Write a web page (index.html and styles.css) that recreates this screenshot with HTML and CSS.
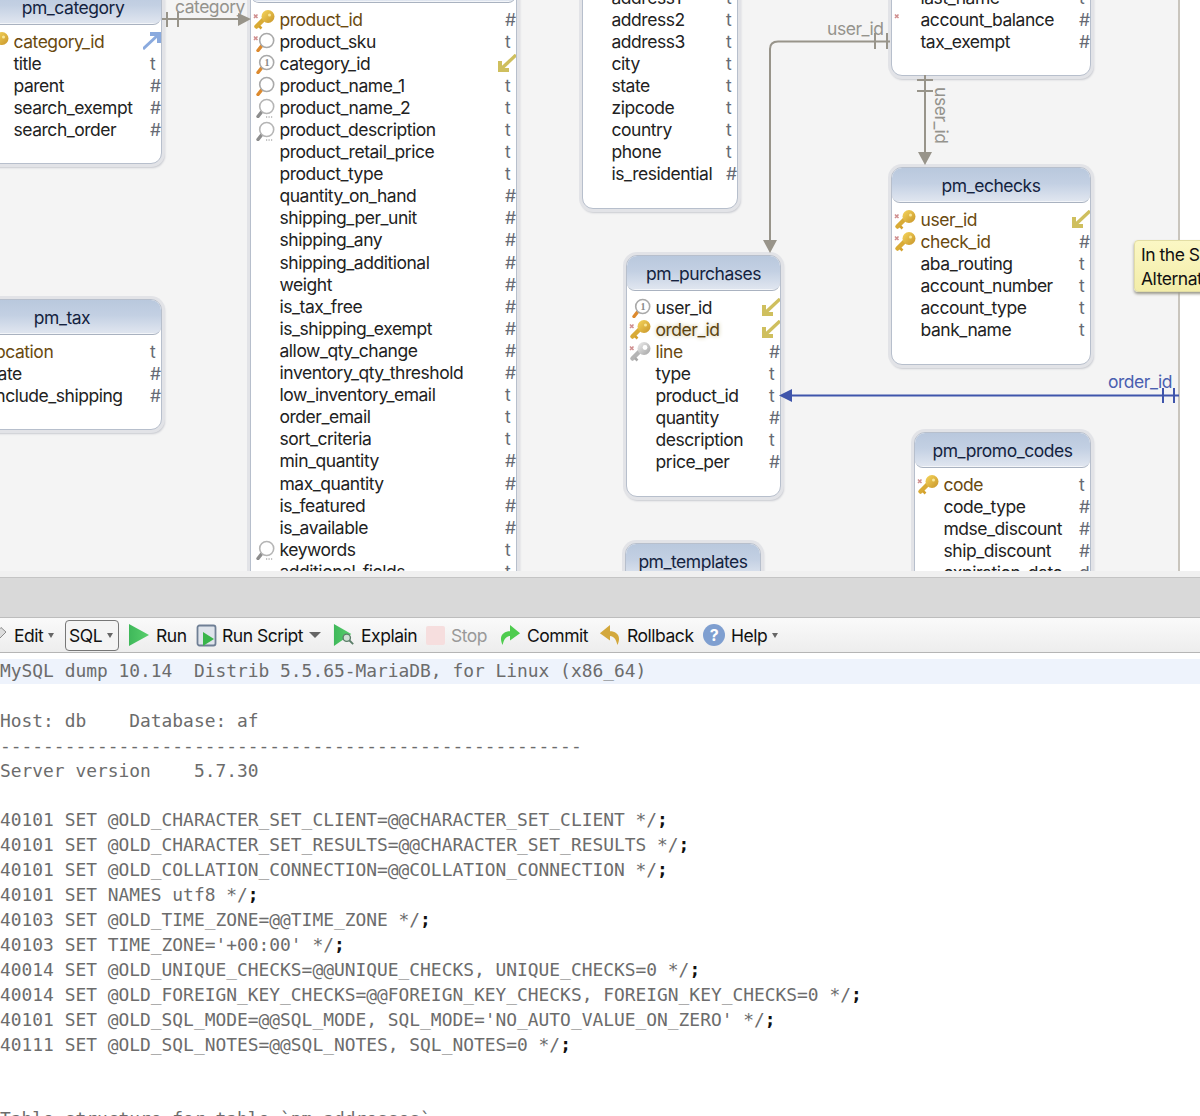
FILE: index.html
```html
<!DOCTYPE html>
<html lang="en">
<head>
  <meta charset="UTF-8">
  <title>Schema designer</title>
  <link rel="stylesheet" href="styles.css">
</head>
<body>
  <svg class="defs" aria-hidden="true">
    <defs>
      <linearGradient id="gold" x1="0" y1="0" x2="1" y2="1">
        <stop offset="0" stop-color="#f6d65c"/>
        <stop offset="1" stop-color="#c8952a"/>
      </linearGradient>
      <linearGradient id="silver" x1="0" y1="0" x2="1" y2="1">
        <stop offset="0" stop-color="#eeeeee"/>
        <stop offset="1" stop-color="#a4a4a4"/>
      </linearGradient>
      <linearGradient id="green" x1="0" y1="0" x2="1" y2="0">
        <stop offset="0" stop-color="#3fb85a"/>
        <stop offset="1" stop-color="#58cf6c"/>
      </linearGradient>
      <symbol id="cross" viewBox="0 0 26 22">
        <path d="M2 6.500 5.500 10M5.500 6.500 2 10" stroke="#d08f8f" stroke-width="1.600" fill="none"/>
      </symbol>
      <symbol id="key" viewBox="0 0 26 22">
        <path d="M11 12 4.500 18.500" stroke="#d9ab36" stroke-width="4.500" stroke-linecap="round"/>
        <path d="M7 18l2.500 2.500" stroke="#d4a22f" stroke-width="2.500"/>
        <circle cx="16" cy="8.500" r="6.500" fill="url(#gold)"/>
        <circle cx="17.500" cy="7" r="1.500" fill="#f9e89a"/>
      </symbol>
      <symbol id="key-grey" viewBox="0 0 26 22">
        <path d="M11 12 4.500 18.500" stroke="#b5b5b5" stroke-width="4.500" stroke-linecap="round"/>
        <path d="M7 18l2.500 2.500" stroke="#aaa" stroke-width="2.500"/>
        <circle cx="16" cy="8.500" r="6.500" fill="url(#silver)"/>
        <circle cx="17" cy="7.500" r="2.400" fill="#fff"/>
      </symbol>
      <symbol id="lens-orange" viewBox="0 0 26 22">
        <path d="M9.500 16 6 20.500" stroke="#dd8a2e" stroke-width="3.400" stroke-linecap="round"/>
        <circle cx="14.700" cy="10.500" r="7" fill="#fff" stroke="#a9a9a9" stroke-width="1.600"/>
      </symbol>
      <symbol id="lens-grey" viewBox="0 0 26 22">
        <path d="M9.500 16 6 20.500" stroke="#8d8d8d" stroke-width="3.400" stroke-linecap="round"/>
        <circle cx="14.700" cy="10.500" r="7" fill="#fff" stroke="#b5b5b5" stroke-width="1.600"/>
        <path d="M14 21h1.200M16.500 21h1.200M19 21h1.200" stroke="#888"/>
      </symbol>
      <symbol id="lens-one" viewBox="0 0 26 22">
        <path d="M9.500 16 6 20.500" stroke="#dd8a2e" stroke-width="3.400" stroke-linecap="round"/>
        <circle cx="14.700" cy="10.500" r="7" fill="#fff" stroke="#a9a9a9" stroke-width="1.600"/>
        <text x="14.700" y="14" class="lens-digit">1</text>
      </symbol>
      <symbol id="fk-in" viewBox="0 0 18 18">
        <path d="M3 15 18 1" stroke="#cfbf5e" stroke-width="3.400"/>
        <polygon points="0,7 4,7 4,14 11,14 11,18 0,18" fill="#cfbf5e"/>
      </symbol>
      <symbol id="fk-out" viewBox="0 0 18 18">
        <path d="M0 17 15 3" stroke="#8aaade" stroke-width="3"/>
        <polygon points="7,0 18,0 18,11 14,11 14,4 7,4" fill="#8aaade"/>
      </symbol>
    </defs>
  </svg>

  <div class="canvas">
    <!-- pm_category -->
    <div class="table tbl-category">
      <div class="table-head">pm_category</div>
      <div class="row pk"><svg class="ico"><use href="#key"/></svg><span class="name">category_id</span><svg class="fk"><use href="#fk-out"/></svg></div>
      <div class="row"><span class="ico"></span><span class="name">title</span><span class="type">t</span></div>
      <div class="row"><span class="ico"></span><span class="name">parent</span><span class="type">#</span></div>
      <div class="row"><span class="ico"></span><span class="name">search_exempt</span><span class="type">#</span></div>
      <div class="row"><span class="ico"></span><span class="name">search_order</span><span class="type">#</span></div>
    </div>

    <!-- pm_tax -->
    <div class="table tbl-tax">
      <div class="table-head">pm_tax</div>
      <div class="row pk"><span class="ico"></span><span class="name">location</span><span class="type">t</span></div>
      <div class="row"><span class="ico"></span><span class="name">rate</span><span class="type">#</span></div>
      <div class="row"><span class="ico"></span><span class="name">include_shipping</span><span class="type">#</span></div>
    </div>

    <!-- pm_products -->
    <div class="table tbl-products">
      <div class="table-head">pm_products</div>
      <div class="row pk"><svg class="ico"><use href="#key"/><use href="#cross"/></svg><span class="name">product_id</span><span class="type">#</span></div>
      <div class="row"><svg class="ico"><use href="#lens-orange"/><use href="#cross"/></svg><span class="name">product_sku</span><span class="type">t</span></div>
      <div class="row"><svg class="ico"><use href="#lens-one"/></svg><span class="name">category_id</span><svg class="fk"><use href="#fk-in"/></svg></div>
      <div class="row"><svg class="ico"><use href="#lens-orange"/></svg><span class="name">product_name_1</span><span class="type">t</span></div>
      <div class="row"><svg class="ico"><use href="#lens-grey"/></svg><span class="name">product_name_2</span><span class="type">t</span></div>
      <div class="row"><svg class="ico"><use href="#lens-grey"/></svg><span class="name">product_description</span><span class="type">t</span></div>
      <div class="row"><span class="ico"></span><span class="name">product_retail_price</span><span class="type">t</span></div>
      <div class="row"><span class="ico"></span><span class="name">product_type</span><span class="type">t</span></div>
      <div class="row"><span class="ico"></span><span class="name">quantity_on_hand</span><span class="type">#</span></div>
      <div class="row"><span class="ico"></span><span class="name">shipping_per_unit</span><span class="type">#</span></div>
      <div class="row"><span class="ico"></span><span class="name">shipping_any</span><span class="type">#</span></div>
      <div class="row"><span class="ico"></span><span class="name">shipping_additional</span><span class="type">#</span></div>
      <div class="row"><span class="ico"></span><span class="name">weight</span><span class="type">#</span></div>
      <div class="row"><span class="ico"></span><span class="name">is_tax_free</span><span class="type">#</span></div>
      <div class="row"><span class="ico"></span><span class="name">is_shipping_exempt</span><span class="type">#</span></div>
      <div class="row"><span class="ico"></span><span class="name">allow_qty_change</span><span class="type">#</span></div>
      <div class="row"><span class="ico"></span><span class="name">inventory_qty_threshold</span><span class="type">#</span></div>
      <div class="row"><span class="ico"></span><span class="name">low_inventory_email</span><span class="type">t</span></div>
      <div class="row"><span class="ico"></span><span class="name">order_email</span><span class="type">t</span></div>
      <div class="row"><span class="ico"></span><span class="name">sort_criteria</span><span class="type">t</span></div>
      <div class="row"><span class="ico"></span><span class="name">min_quantity</span><span class="type">#</span></div>
      <div class="row"><span class="ico"></span><span class="name">max_quantity</span><span class="type">#</span></div>
      <div class="row"><span class="ico"></span><span class="name">is_featured</span><span class="type">#</span></div>
      <div class="row"><span class="ico"></span><span class="name">is_available</span><span class="type">#</span></div>
      <div class="row"><svg class="ico"><use href="#lens-grey"/></svg><span class="name">keywords</span><span class="type">t</span></div>
      <div class="row"><span class="ico"></span><span class="name">additional_fields</span><span class="type">t</span></div>
    </div>

    <!-- pm_addresses -->
    <div class="table tbl-addresses">
      <div class="table-head">pm_addresses</div>
      <div class="row"><span class="ico"></span><span class="name">address1</span><span class="type">t</span></div>
      <div class="row"><span class="ico"></span><span class="name">address2</span><span class="type">t</span></div>
      <div class="row"><span class="ico"></span><span class="name">address3</span><span class="type">t</span></div>
      <div class="row"><span class="ico"></span><span class="name">city</span><span class="type">t</span></div>
      <div class="row"><span class="ico"></span><span class="name">state</span><span class="type">t</span></div>
      <div class="row"><span class="ico"></span><span class="name">zipcode</span><span class="type">t</span></div>
      <div class="row"><span class="ico"></span><span class="name">country</span><span class="type">t</span></div>
      <div class="row"><span class="ico"></span><span class="name">phone</span><span class="type">t</span></div>
      <div class="row"><span class="ico"></span><span class="name">is_residential</span><span class="type">#</span></div>
    </div>

    <!-- pm_users -->
    <div class="table tbl-users">
      <div class="table-head">pm_users</div>
      <div class="row"><span class="ico"></span><span class="name">last_name</span><span class="type">t</span></div>
      <div class="row"><svg class="ico"><use href="#cross"/></svg><span class="name">account_balance</span><span class="type">#</span></div>
      <div class="row"><span class="ico"></span><span class="name">tax_exempt</span><span class="type">#</span></div>
    </div>

    <!-- pm_echecks -->
    <div class="table tbl-echecks">
      <div class="table-head">pm_echecks</div>
      <div class="row pk"><svg class="ico"><use href="#key"/><use href="#cross"/></svg><span class="name">user_id</span><svg class="fk"><use href="#fk-in"/></svg></div>
      <div class="row pk"><svg class="ico"><use href="#key"/><use href="#cross"/></svg><span class="name">check_id</span><span class="type">#</span></div>
      <div class="row"><span class="ico"></span><span class="name">aba_routing</span><span class="type">t</span></div>
      <div class="row"><span class="ico"></span><span class="name">account_number</span><span class="type">t</span></div>
      <div class="row"><span class="ico"></span><span class="name">account_type</span><span class="type">t</span></div>
      <div class="row"><span class="ico"></span><span class="name">bank_name</span><span class="type">t</span></div>
    </div>

    <!-- pm_purchases -->
    <div class="table tbl-purchases">
      <div class="table-head">pm_purchases</div>
      <div class="row"><svg class="ico"><use href="#lens-one"/></svg><span class="name">user_id</span><svg class="fk"><use href="#fk-in"/></svg></div>
      <div class="row pk lit"><svg class="ico"><use href="#key"/><use href="#cross"/></svg><span class="name">order_id</span><svg class="fk"><use href="#fk-in"/></svg></div>
      <div class="row pk"><svg class="ico"><use href="#key-grey"/><use href="#cross"/></svg><span class="name">line</span><span class="type">#</span></div>
      <div class="row"><span class="ico"></span><span class="name">type</span><span class="type">t</span></div>
      <div class="row"><span class="ico"></span><span class="name">product_id</span><span class="type">t</span></div>
      <div class="row"><span class="ico"></span><span class="name">quantity</span><span class="type">#</span></div>
      <div class="row"><span class="ico"></span><span class="name">description</span><span class="type">t</span></div>
      <div class="row"><span class="ico"></span><span class="name">price_per</span><span class="type">#</span></div>
    </div>

    <!-- pm_promo_codes -->
    <div class="table tbl-promo">
      <div class="table-head">pm_promo_codes</div>
      <div class="row pk"><svg class="ico"><use href="#key"/><use href="#cross"/></svg><span class="name">code</span><span class="type">t</span></div>
      <div class="row"><span class="ico"></span><span class="name">code_type</span><span class="type">#</span></div>
      <div class="row"><span class="ico"></span><span class="name">mdse_discount</span><span class="type">#</span></div>
      <div class="row"><span class="ico"></span><span class="name">ship_discount</span><span class="type">#</span></div>
      <div class="row"><span class="ico"></span><span class="name">expiration_date</span><span class="type">d</span></div>
    </div>

    <div class="table tbl-templates">
      <div class="table-head">pm_templates</div>
    </div>

    <!-- relation lines sit over the tables -->
    <svg class="relations" viewBox="0 0 1200 572">
      <g class="rel-grey">
        <path d="M162 19H240M167 12V27M178 12V27"/>
        <path d="M770 241V49Q770 41.500 778 41.500H890M875 33V49M887 33V49"/>
        <path d="M925 75V154M917 80H933M917 91H933"/>
        <polygon points="251,19 238,13 238,26"/>
        <polygon points="770,253 763,240 777,240"/>
        <polygon points="925,165 918,152 932,152"/>
      </g>
      <g class="rel-blue">
        <path d="M790 395.500H1179M1163 388V403M1174 388V403"/>
        <polygon points="779,395.500 792,389 792,402"/>
      </g>
      <text x="175" y="13" class="rel-label">category</text>
      <text x="827" y="35" class="rel-label">user_id</text>
      <text transform="translate(935 87) rotate(90)" class="rel-label">user_id</text>
      <text x="1108" y="388" class="rel-label rel-label-blue">order_id</text>
    </svg>

    <div class="tooltip">
      <div>In the S</div>
      <div>Alternat</div>
    </div>
  </div>

  <div class="splitter"></div>

  <div class="toolbar">
    <div class="tool tool-edit">
      <svg class="tool-ico-pencil" viewBox="0 0 20 18"><path d="M2 17l1.500-5.500L13 1.500l5 4.500-9.500 9.500z" fill="#dcdcdc" stroke="#8b8b8b"/></svg>
      <span>Edit</span><span class="caret"></span>
    </div>
    <div class="tool-select"><span>SQL</span><span class="caret"></span></div>
    <div class="tool tool-run">
      <svg class="tool-ico" viewBox="0 0 22 24"><polygon points="1,1 21,12 1,23" fill="url(#green)"/></svg>
      <span>Run</span>
    </div>
    <div class="tool tool-script">
      <svg class="tool-ico tool-ico-script" viewBox="0 0 22 24"><rect x="1.500" y="2.500" width="18" height="20" rx="2" fill="#dfe4eb" stroke="#6f7f95" stroke-width="1.800"/><polygon points="7,9 18,16 7,23" fill="#39b54a"/></svg>
      <span>Run Script</span><span class="caret caret-wide"></span>
    </div>
    <div class="tool tool-explain">
      <svg class="tool-ico" viewBox="0 0 24 26"><polygon points="1,1 20,12 1,25" fill="url(#green)"/><circle cx="15" cy="16" r="4" fill="#cfe0d4" stroke="#5b7d68" stroke-width="1.500"/><path d="M18 19l4 4" stroke="#5b7d68" stroke-width="2"/></svg>
      <span>Explain</span>
    </div>
    <div class="tool tool-stop is-off">
      <span class="stop-square"></span>
      <span>Stop</span>
    </div>
    <div class="tool tool-commit">
      <svg class="tool-ico" viewBox="0 0 24 24"><path d="M4 23C-1 13 5 8 12 8V1l11 9-11 8v-5C8 13 5 17 4 23z" fill="#4fcc4f"/></svg>
      <span>Commit</span>
    </div>
    <div class="tool tool-rollback">
      <svg class="tool-ico" viewBox="0 0 24 24"><path d="M20 23C25 13 19 8 12 8V1L1 10l11 8v-5c4 0 7 4 8 10z" fill="#d3a83c"/></svg>
      <span>Rollback</span>
    </div>
    <div class="tool tool-help">
      <span class="help-ball">?</span>
      <span>Help</span><span class="caret"></span>
    </div>
  </div>

  <div class="editor">
<pre class="code"><span class="current">-- MySQL dump 10.14  Distrib 5.5.65-MariaDB, for Linux (x86_64)</span>
--
-- Host: db    Database: af
-- ------------------------------------------------------
-- Server version    5.7.30

/*!40101 SET @OLD_CHARACTER_SET_CLIENT=@@CHARACTER_SET_CLIENT */<b>;</b>
/*!40101 SET @OLD_CHARACTER_SET_RESULTS=@@CHARACTER_SET_RESULTS */<b>;</b>
/*!40101 SET @OLD_COLLATION_CONNECTION=@@COLLATION_CONNECTION */<b>;</b>
/*!40101 SET NAMES utf8 */<b>;</b>
/*!40103 SET @OLD_TIME_ZONE=@@TIME_ZONE */<b>;</b>
/*!40103 SET TIME_ZONE='+00:00' */<b>;</b>
/*!40014 SET @OLD_UNIQUE_CHECKS=@@UNIQUE_CHECKS, UNIQUE_CHECKS=0 */<b>;</b>
/*!40014 SET @OLD_FOREIGN_KEY_CHECKS=@@FOREIGN_KEY_CHECKS, FOREIGN_KEY_CHECKS=0 */<b>;</b>
/*!40101 SET @OLD_SQL_MODE=@@SQL_MODE, SQL_MODE='NO_AUTO_VALUE_ON_ZERO' */<b>;</b>
/*!40111 SET @OLD_SQL_NOTES=@@SQL_NOTES, SQL_NOTES=0 */<b>;</b>

--
-- Table structure for table `pm_addresses`</pre>
  </div>
</body>
</html>
```

FILE: styles.css
```css
html, body {
  margin: 0;
  padding: 0;
  height: 1116px;
  overflow: hidden;
  background: #fff;
  font-family: 'Inter', 'Liberation Sans', sans-serif;
  color: #222;
}

.defs {
  position: absolute;
  width: 0;
  height: 0;
}

.lens-digit {
  font: bold 10px 'Liberation Serif', serif;
  fill: #888;
  text-anchor: middle;
}

/* diagram */

.canvas {
  position: relative;
  height: 571px;
  overflow: hidden;
  background: linear-gradient(to right, #f4f4f4 1178px, #c9c5bd 1178px, #c9c5bd 1180px, #fff 1180px);
}

.table {
  position: absolute;
  box-sizing: border-box;
  background: #fff;
  border: 1px solid #b7bfcc;
  border-radius: 11px;
  box-shadow: 0 0 0 3px #e2e3e7, 1px 2px 2px 2px #c8cad0;
  padding-bottom: 23px;
  font-size: 17.5px;
  letter-spacing: -0.47px;
}

.table-head {
  box-sizing: border-box;
  height: 35px;
  line-height: 36px;
  margin-bottom: 5px;
  text-align: center;
  color: #14233f;
  border-bottom: 1px solid #a9b2c0;
  border-radius: 10px 10px 8px 8px;
  background: linear-gradient(#b9c8dd, #c3d0e3 45%, #dfe5ef 96%, #fff);
}

.tbl-category { left: -16px; top: -11px; width: 178px; }
.tbl-tax { left: -38px; top: 299px; width: 200px; }
.tbl-products { left: 250px; top: -33px; width: 267px; }
.tbl-addresses { left: 582px; top: -55px; width: 156px; }
.tbl-users { left: 891px; top: -55px; width: 200px; }
.tbl-echecks { left: 891px; top: 167px; width: 200px; }
.tbl-purchases { left: 626px; top: 255px; width: 155px; }
.tbl-promo { left: 914px; top: 432px; width: 177px; }
.tbl-templates { left: 625px; top: 543px; width: 136px; }

.row {
  display: flex;
  align-items: center;
  height: 22.1px;
  white-space: nowrap;
}

.ico {
  flex: none;
  width: 26px;
  height: 22px;
  margin: 0 1.5px 0 1px;
}

.name {
  flex: 1;
  min-width: 0;
}

.type {
  flex: none;
  width: 11px;
  color: #666a73;
}

.fk {
  flex: none;
  width: 18px;
  height: 18px;
  margin-left: -7px;
}

.pk .name {
  color: #6a4a10;
}

.lit .name {
  color: #5c4210;
  text-shadow: 0 0 4px #c4bc8e;
}

/* relations */

.relations {
  position: absolute;
  left: 0;
  top: 0;
  width: 1200px;
  height: 572px;
  pointer-events: none;
}

.rel-grey path {
  fill: none;
  stroke: #98948a;
  stroke-width: 2;
}

.rel-grey polygon {
  fill: #98948a;
}

.rel-blue path {
  fill: none;
  stroke: #3f55ab;
  stroke-width: 2;
}

.rel-blue polygon {
  fill: #3f55ab;
}

.rel-label {
  font-size: 17.5px;
  letter-spacing: -0.47px;
  fill: #94938d;
}

.rel-label-blue {
  fill: #4a5fb0;
}

.tooltip {
  position: absolute;
  left: 1134px;
  top: 240px;
  box-sizing: border-box;
  width: 80px;
  height: 52px;
  padding: 2px 6px;
  background: linear-gradient(#fbf7c4, #f3eda9);
  border: 1px solid #e2dda4;
  border-radius: 4px;
  box-shadow: 0 2px 3px #9b9a8c;
  font-size: 17.5px;
  line-height: 24px;
  letter-spacing: -0.47px;
  color: #111;
  white-space: nowrap;
  overflow: hidden;
}

/* splitter + toolbar */

.splitter {
  height: 46px;
  box-sizing: border-box;
  background: #d9d9d9;
  border-top: 6px solid #f0f0f0;
  box-shadow: inset 0 1px 0 #c4c4c4;
}

.toolbar {
  box-sizing: border-box;
  display: flex;
  align-items: center;
  height: 36px;
  background: linear-gradient(#fafafa, #ededed);
  border-top: 1px solid #bdbdbd;
  border-bottom: 1px solid #b5b5b5;
  font-size: 17.5px;
  letter-spacing: -0.47px;
  color: #111;
  white-space: nowrap;
}

.tool {
  display: flex;
  align-items: center;
  gap: 6px;
  flex: none;
}

.tool-edit { margin-left: -12px; width: 77px; }
.tool-run { margin-left: 9px; width: 68px; }
.tool-script { width: 137px; gap: 4px; }
.tool-explain { width: 93px; }
.tool-stop { width: 73px; }
.tool-commit { width: 100px; }
.tool-rollback { width: 104px; }

.tool-ico {
  width: 22px;
  height: 24px;
  flex: none;
}

.tool-ico-pencil {
  width: 20px;
  height: 18px;
  flex: none;
}

.caret {
  flex: none;
  width: 0;
  height: 0;
  margin-left: -1px;
  border-left: 3.500px solid transparent;
  border-right: 3.500px solid transparent;
  border-top: 5px solid #666;
}

.tool-script .caret {
  margin-left: 2px;
}

.caret-wide {
  border-left-width: 6px;
  border-right-width: 6px;
  border-top-width: 6px;
}

.tool-select {
  box-sizing: border-box;
  display: flex;
  align-items: center;
  justify-content: space-between;
  width: 54px;
  height: 31px;
  padding: 0 5px 0 3px;
  border: 1px solid #777;
  border-radius: 4px;
  background: #f4f4f4;
  flex: none;
}

.is-off {
  color: #999;
}

.stop-square {
  width: 19px;
  height: 19px;
  border-radius: 2px;
  background: #f6dede;
  flex: none;
}

.help-ball {
  flex: none;
  width: 22px;
  height: 22px;
  border-radius: 50%;
  background: #7f9fd0;
  color: #fff;
  font-weight: bold;
  font-size: 16px;
  line-height: 22px;
  text-align: center;
}

/* sql editor */

.editor {
  padding-top: 6px;
  overflow: hidden;
}

.code {
  margin: 0 0 0 -32.3px;
  font-family: 'DejaVu Sans Mono', monospace;
  font-size: 17.9px;
  line-height: 24.9px;
  color: #6c6c6c;
}

.code b {
  color: #111;
}

.current {
  display: block;
  height: 24.9px;
  margin-bottom: -24.9px;
  background: #eef3fc;
}
```
